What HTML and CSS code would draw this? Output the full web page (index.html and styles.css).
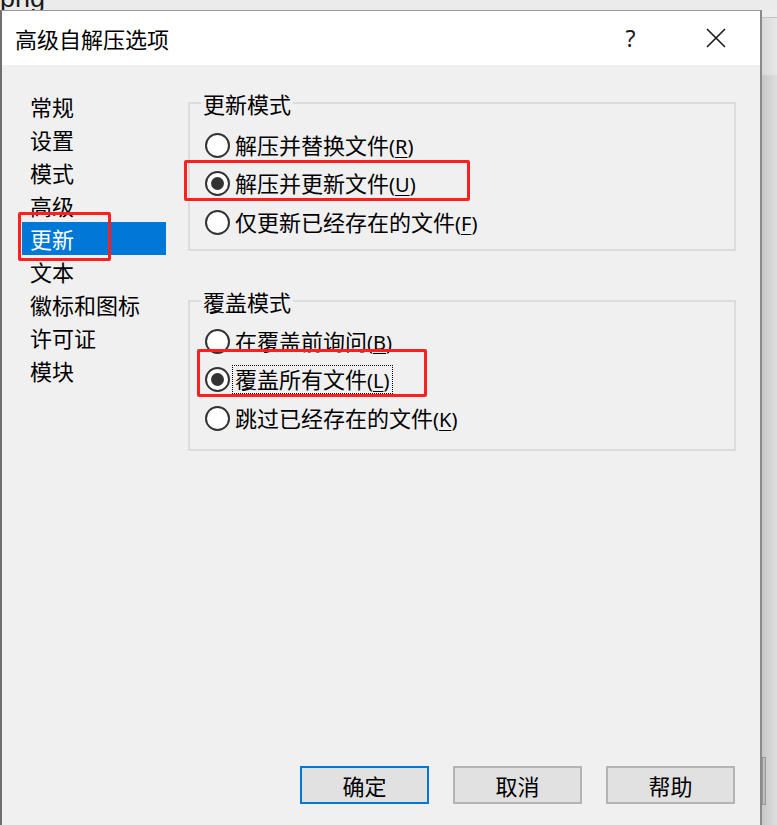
FILE: index.html
```html
<!DOCTYPE html>
<html lang="zh-CN">
<head>
<meta charset="utf-8">
<title>高级自解压选项</title>
<link rel="stylesheet" href="styles.css">
</head>
<body>
<div class="screen">
  <div class="backdrop-top"><span class="bg-file">png</span></div>
  <div class="row">
    <div class="dialog">
      <div class="titlebar">
        <span class="title">高级自解压选项</span>
        <span class="cap-btn help">?</span>
        <span class="cap-btn close">
          <svg width="20" height="20" viewBox="0 0 20 20"><path d="M1 1 L19 19 M19 1 L1 19" stroke="#1a1a1a" stroke-width="1.6" fill="none"/></svg>
        </span>
      </div>
      <div class="content">
        <ul class="nav">
          <li>常规</li>
          <li>设置</li>
          <li>模式</li>
          <li>高级</li>
          <li class="selected">更新<span class="mark mark-nav"></span></li>
          <li>文本</li>
          <li>徽标和图标</li>
          <li>许可证</li>
          <li>模块</li>
        </ul>
        <div class="panel">
          <fieldset class="group">
            <legend>更新模式</legend>
            <label class="radio"><span class="dot"></span><span class="text">解压并替换文件<span class="key">(<u>R</u>)</span></span></label>
            <label class="radio checked"><span class="dot"></span><span class="text">解压并更新文件<span class="key">(<u>U</u>)</span></span><span class="mark mark-update"></span></label>
            <label class="radio"><span class="dot"></span><span class="text">仅更新已经存在的文件<span class="key">(<u>F</u>)</span></span></label>
          </fieldset>
          <fieldset class="group group-second">
            <legend>覆盖模式</legend>
            <label class="radio"><span class="dot"></span><span class="text">在覆盖前询问<span class="key">(<u>B</u>)</span></span></label>
            <label class="radio checked"><span class="dot"></span><span class="text focus">覆盖所有文件<span class="key">(<u>L</u>)</span></span><span class="mark mark-overwrite"></span></label>
            <label class="radio"><span class="dot"></span><span class="text">跳过已经存在的文件<span class="key">(<u>K</u>)</span></span></label>
          </fieldset>
        </div>
      </div>
      <div class="footer">
        <button class="btn default">确定</button>
        <button class="btn">取消</button>
        <button class="btn">帮助</button>
      </div>
    </div>
    <div class="side">
      <div class="side-top"></div>
      <div class="side-line"></div>
      <div class="side-upper"></div>
      <div class="side-lower"><div class="thumb"></div></div>
    </div>
  </div>
</div>
</body>
</html>
```

FILE: styles.css
```css
* { box-sizing: border-box; }
html, body { margin: 0; padding: 0; }
body {
  font-family: "Noto Sans", "Noto Sans CJK SC", sans-serif;
  color: #000;
  background: #e8e8e8;
}
.screen {
  width: 777px;
  height: 825px;
  display: flex;
  flex-direction: column;
  overflow: hidden;
  background: #e8e8e8;
}
.backdrop-top {
  height: 10px;
  overflow: hidden;
  display: flex;
  align-items: flex-end;
  background: #ebebeb;
}
.bg-file {
  font-family: "Liberation Sans", sans-serif;
  font-size: 27px;
  line-height: 24px;
  color: #1a1a1a;
  padding-left: 0;
}
.row {
  flex: 1;
  display: flex;
}
.dialog {
  width: 762px;
  height: 815px;
  display: flex;
  flex-direction: column;
  background: #f0f0f0;
  border-left: 2px solid #6f6f6f;
  border-right: 2px solid #8a8a8a;
  border-top: 1px solid #9a9a9a;
}
.titlebar {
  height: 54px;
  background: #fff;
  display: flex;
  align-items: center;
  padding-left: 13px;
  padding-right: 2px;
}
.title {
  font-family: "Noto Sans CJK SC", sans-serif;
  font-size: 22px;
  line-height: 26px;
  flex: 1;
}
.cap-btn {
  width: 85px;
  height: 54px;
  display: flex;
  align-items: center;
  justify-content: center;
}
.help {
  font-family: "Noto Sans", sans-serif;
  font-size: 23px;
  color: #1a1a1a;
}
.content {
  flex: 1;
  display: flex;
}
.nav {
  list-style: none;
  margin: 0 0 0 20px;
  padding: 25px 0 0 0;
  width: 144px;
}
.nav li {
  position: relative;
  height: 33px;
  line-height: 33px;
  padding-left: 8px;
  font-family: "Noto Sans CJK SC", sans-serif;
  font-size: 22px;
}
.nav li.selected {
  background: #0078d7;
  color: #fff;
}
.panel {
  flex: 1;
  margin-left: 22px;
  margin-right: 24px;
  padding-top: 25px;
}
.group {
  margin: 0;
  padding: 10px 0 7.5px 0;
  border: 2px solid #dcdcdc;
  min-inline-size: 0;
}
.group-second {
  margin-top: 37px;
  padding: 8px 0 11.5px 0;
}
.group legend {
  margin-left: 11px;
  padding: 0 2px;
  font-family: "Noto Sans CJK SC", sans-serif;
  font-size: 22px;
  line-height: 26px;
}
.radio {
  position: relative;
  display: flex;
  align-items: center;
  height: 38.5px;
  padding-left: 15px;
  font-size: 22px;
}
.dot {
  width: 25px;
  height: 25px;
  border: 2px solid #333;
  border-radius: 50%;
  background: #fff;
  display: flex;
  align-items: center;
  justify-content: center;
  margin-right: 2px;
  flex: none;
}
.radio.checked .dot::after {
  content: "";
  width: 13px;
  height: 13px;
  border-radius: 50%;
  background: #333;
}
.text {
  font-family: "Noto Sans CJK SC", sans-serif;
  line-height: 22px;
  padding: 1px 2px;
  border: 1px solid transparent;
  white-space: nowrap;
}
.text.focus {
  border: 1px dotted #000;
}
.key {
  font-family: "Noto Sans", sans-serif;
  font-size: 20px;
}
.key u {
  text-decoration-thickness: 1px;
  text-underline-offset: 3px;
}
.mark {
  position: absolute;
  border: 3px solid #ff1f1f;
  border-radius: 2px;
  pointer-events: none;
}
.mark-nav {
  left: -4px;
  top: -10px;
  width: 93px;
  height: 49px;
}
.mark-update {
  left: -6px;
  top: -4.5px;
  width: 286px;
  height: 41px;
}
.mark-overwrite {
  left: 7px;
  top: -11.5px;
  width: 230px;
  height: 48px;
}
.footer {
  display: flex;
  justify-content: flex-end;
  gap: 24px;
  padding: 0 25px 21px 0;
}
.btn {
  width: 129px;
  height: 38px;
  background: #e1e1e1;
  border: 2px solid #b4b4b4;
  border-radius: 0;
  font-family: "Noto Sans CJK SC", sans-serif;
  font-size: 22px;
  color: #000;
  padding: 0;
}
.btn.default {
  border-color: #0078d7;
}
.side {
  flex: 1;
  display: flex;
  flex-direction: column;
}
.side-top {
  height: 7px;
  background: #ededed;
}
.side-line {
  height: 1px;
  background: #c4c4c4;
}
.side-upper {
  height: 57px;
  background: linear-gradient(to right, #d9d9d9, #e8e8e8);
}
.side-lower {
  flex: 1;
  padding-top: 682px;
  background: linear-gradient(to right, #c8c8c8, #dedede);
}
.thumb {
  width: 4px;
  height: 48px;
  background: #bdbdbd;
  border: 1px solid #9a9a9a;
}
```
